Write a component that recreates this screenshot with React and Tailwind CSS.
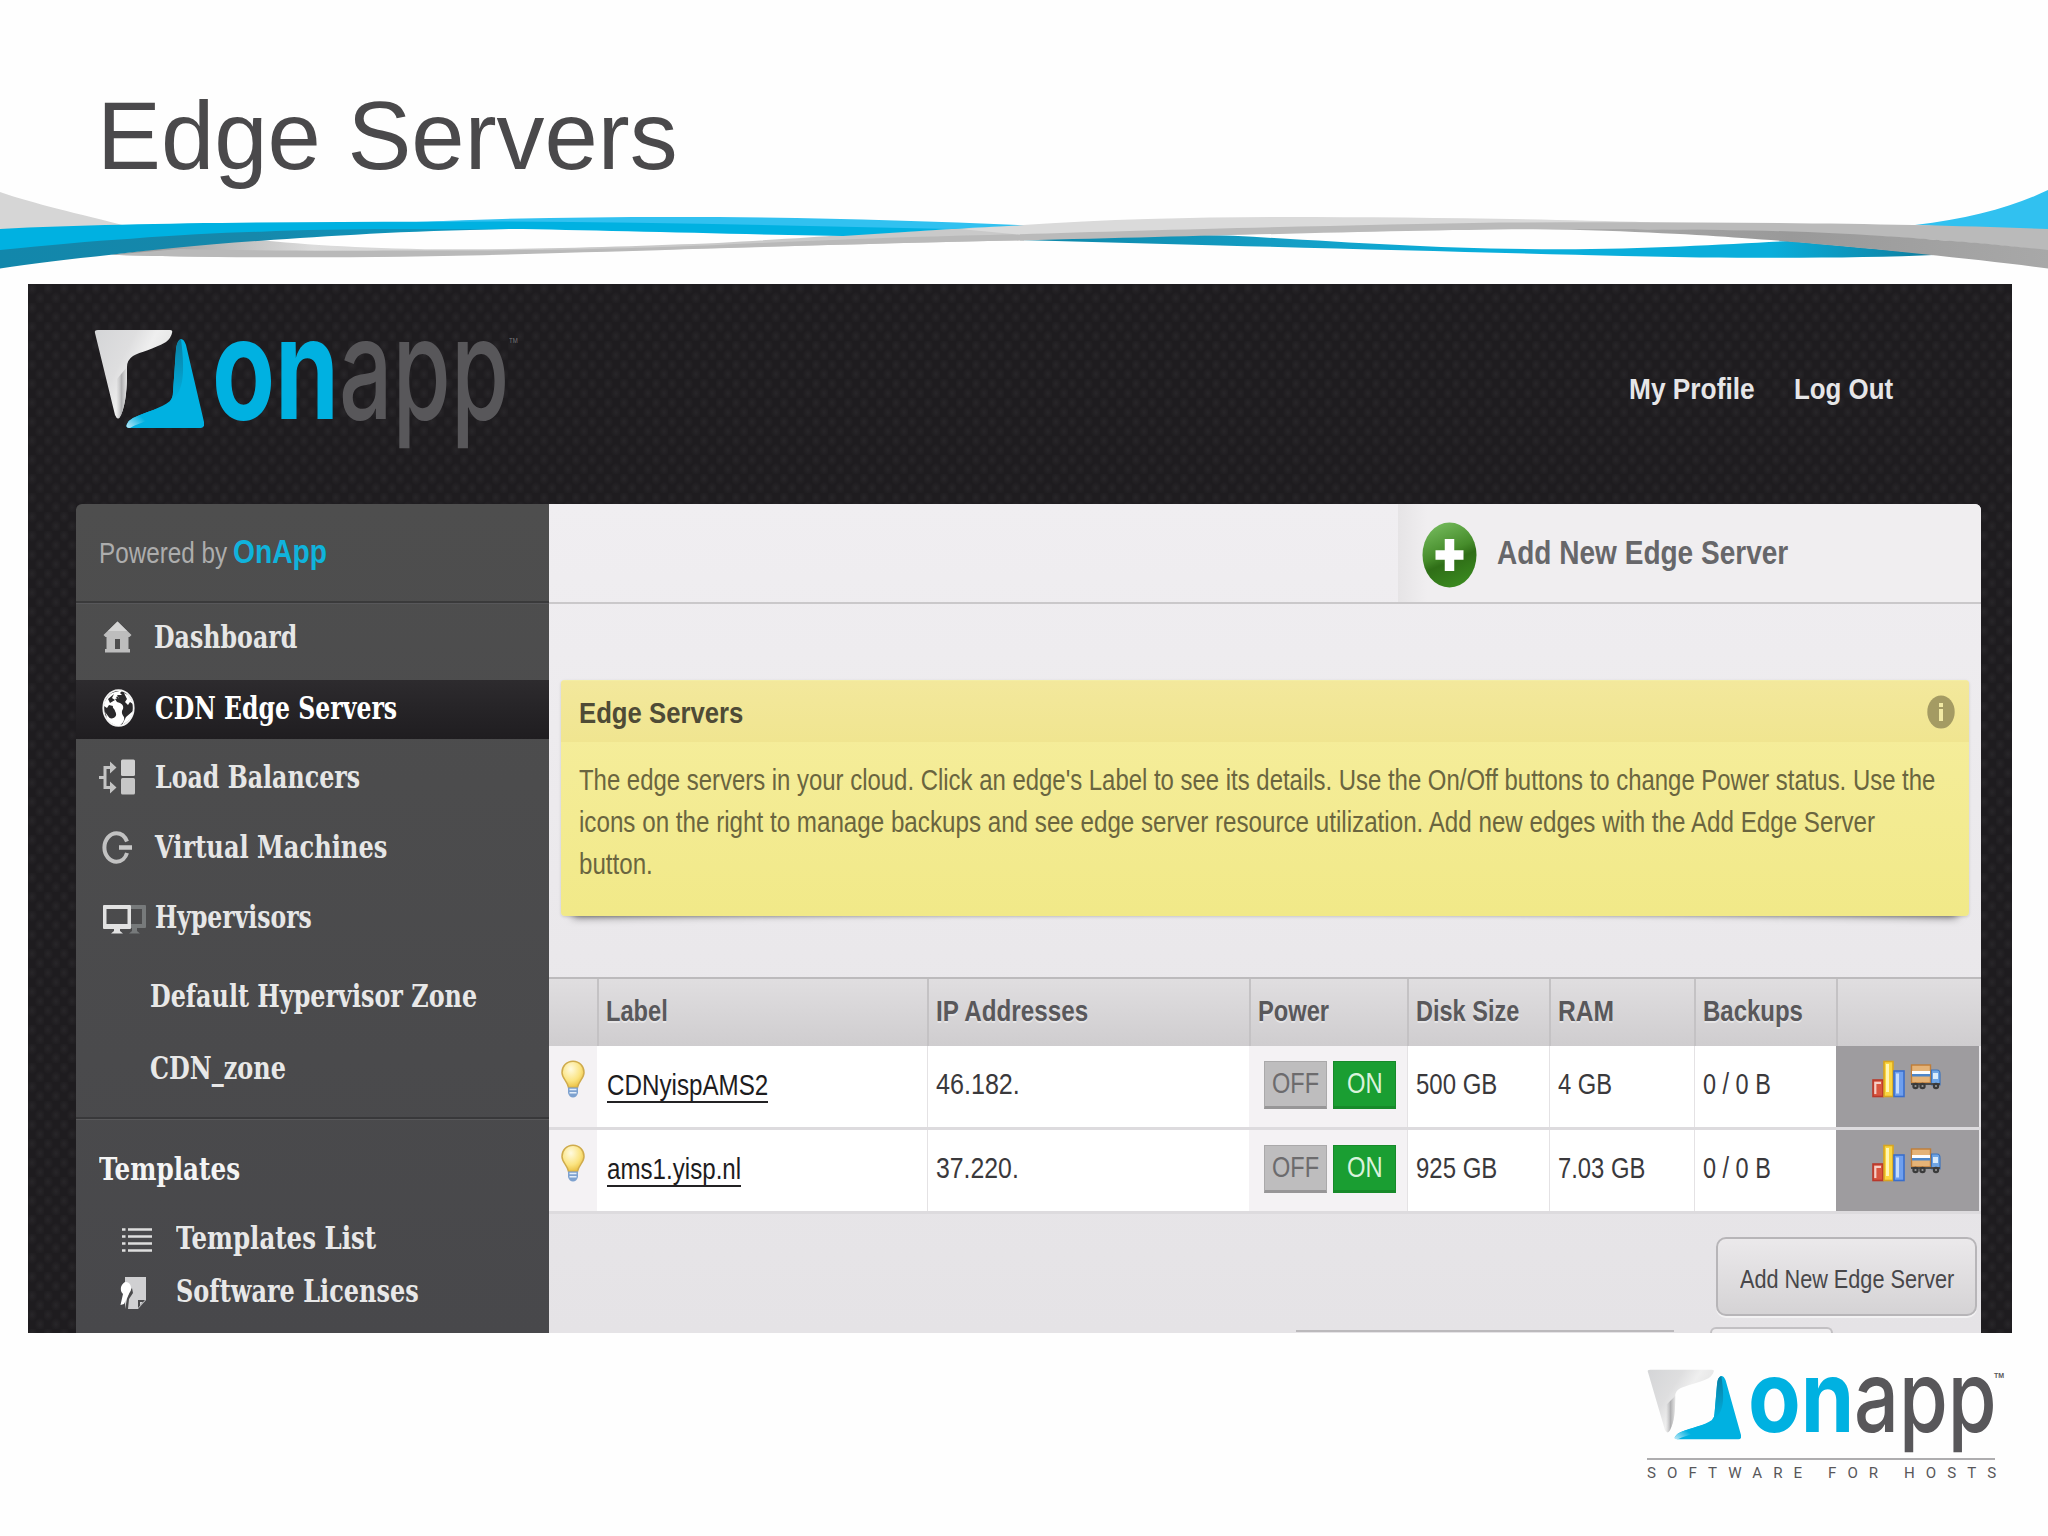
import React, { useLayoutEffect, useRef, useState } from "react";

/* Text squeezed or stretched horizontally to an exact width. */
function Fit({ w, className = "", children }) {
  const ref = useRef(null);
  const [scale, setScale] = useState(1);
  useLayoutEffect(() => {
    const measure = () => {
      if (ref.current) setScale(w / ref.current.offsetWidth);
    };
    measure();
    if (document.fonts && document.fonts.ready) document.fonts.ready.then(measure);
  }, [w]);
  return (
    <span className={"inline-block whitespace-nowrap " + className} style={{ width: w }}>
      <span ref={ref} className="inline-block origin-left" style={{ transform: `scaleX(${scale})` }}>
        {children}
      </span>
    </span>
  );
}

function Waves() {
  return (
    <svg viewBox="0 190 2048 94" className="block h-[94px] w-full">
      <defs>
        <linearGradient id="wBlueLow" x1="1024" x2="1935" y1="0" y2="0" gradientUnits="userSpaceOnUse">
          <stop offset="0" stopColor="#0c86a8" />
          <stop offset="0.3" stopColor="#159fc6" />
          <stop offset="0.5" stopColor="#0aaedb" />
          <stop offset="0.82" stopColor="#0aaedb" />
          <stop offset="1" stopColor="#0f7c9c" />
        </linearGradient>
        <linearGradient id="wGreyL" x1="111" x2="560" y1="0" y2="0" gradientUnits="userSpaceOnUse">
          <stop offset="0" stopColor="#8f8f8f" />
          <stop offset="0.45" stopColor="#dcdcdc" />
          <stop offset="1" stopColor="#c9c9c9" />
        </linearGradient>
        <linearGradient id="wDark" x1="0" x2="509" y1="0" y2="0" gradientUnits="userSpaceOnUse">
          <stop offset="0" stopColor="#1287ab" />
          <stop offset="0.5" stopColor="#1688ab" />
          <stop offset="1" stopColor="#0b9cc5" />
        </linearGradient>
        <linearGradient id="wDarkGrey" x1="1533" x2="2048" y1="0" y2="0" gradientUnits="userSpaceOnUse">
          <stop offset="0" stopColor="#aeaeae" />
          <stop offset="0.5" stopColor="#999" />
          <stop offset="1" stopColor="#a8a8a8" />
        </linearGradient>
      </defs>
      <path fill="#d6d6d6" d="M0 192C35 204 75 213 131 227L0 232Z" />
      <path fill="#31c1f0" d="M1915 225C1970 219 2015 206 2048 190V232Z" />
      <path fill="url(#wBlueLow)" d="M1019 240C1090 236 1160 233 1233 235.7C1350 242 1430 249 1560 249.3C1650 249 1730 244 1788 241L1940 254.7C1870 258 1790 258 1700 257.5C1560 255 1400 250 1220 245.5Z" />
      <path fill="url(#wGreyL)" d="M240 238C300 244 360 249 457 249.3C540 249.5 640 246 718 243C770 240 815 237 843 235L967 228L1024 225V240C880 243 700 249 560 252C400 258 230 258 111 254.7Z" />
      <path fill="#b9b9b9" d="M180 249C260 251 340 251 400 250.5C560 251 640 248 718 245C860 238 940 236 1024 234V240.5C880 243 700 249 560 253C400 258.5 230 258.5 111 254.7Z" />
      <path fill="#dadada" d="M1019 225.3C1110 219 1200 217 1285 217C1400 217 1540 219 1650 222.4L1650 226L1024 235L960 229Z" />
      <path fill="#bababa" d="M1020 234.3C1150 230 1350 225 1500 222.5C1700 221.5 1900 223 2048 229V251C1900 232 1700 228.5 1533 229.2C1400 230 1250 235 1020 240.5Z" />
      <path fill="url(#wDarkGrey)" d="M1533 229C1640 231 1700 235 1742 238C1800 242 1840 246 1873 249C1940 256 2000 262 2048 268.5V250C2010 246 1970 242 1938 240C1890 236 1850 234 1808 232C1720 229 1640 229 1533 229Z" />
      <path fill="#00b1e1" d="M0 229C120 223 280 222 427 221.7C560 219 660 219 780 222L967 228L843 236C720 234 600 230 509 229L392 230L0 252Z" />
      <path fill="#31c1f0" d="M416 222C520 217.5 620 216.5 718 217C830 218 930 221 1024 225.3L950 229C800 226 650 222 500 221.5Z" />
      <path fill="url(#wDark)" d="M0 250C50 245 90 241 131 238.7C180 235 220 233 261 231.7C300 230 350 229 392 229L509 229C400 231 330 236 261 240.7C200 245 150 250 111 254.7C70 259 30 264 0 268.5Z" />
    </svg>
  );
}

function LogoMark({ className, id }) {
  return (
    <svg viewBox="0 0 110 100" preserveAspectRatio="none" className={className}>
      <defs>
        <linearGradient id={id + "g"} x1="0" y1="0" x2="1" y2="0.6">
          <stop offset="0" stopColor="#d4d5d7" />
          <stop offset="0.4" stopColor="#dededf" />
          <stop offset="0.6" stopColor="#efefef" />
          <stop offset="1" stopColor="#dcdcdc" />
        </linearGradient>
        <linearGradient id={id + "s"} x1="0" y1="0" x2="1" y2="0">
          <stop offset="0" stopColor="#c5c5c6" stopOpacity="0" />
          <stop offset="0.5" stopColor="#b0b0b2" />
          <stop offset="1" stopColor="#e5e5e5" />
        </linearGradient>
        <linearGradient id={id + "b"} x1="0" y1="0" x2="0" y2="1">
          <stop offset="0" stopColor="#0a7ea2" />
          <stop offset="1" stopColor="#00b1e1" />
        </linearGradient>
        <linearGradient id={id + "w"} x1="0" y1="1" x2="1" y2="0.4">
          <stop offset="0" stopColor="#bfe9f7" />
          <stop offset="0.5" stopColor="#00b1e1" />
        </linearGradient>
      </defs>
      <path fill={"url(#" + id + "g)"} d="M1 4Q0 1 4 1H76Q79 1 78 4Q77 9 72 13C60 20 46 23 39 27Q33 31 33 38C33 60 32 74 27 86Q24 93 21 86Z" />
      <path fill={"url(#" + id + "s)"} d="M23 50L33 38C33 60 32 74 27 86Q24 93 22 86Z" />
      <path fill="#00b1e1" d="M87 10Q90 10 92 16L110 93Q111 99 107 99H36Q31 99 33 95Q35 91 39 89C52 83 68 79 76 72Q79 69 79 63L82 20Q84 10 87 10Z" />
      <path fill={"url(#" + id + "b)"} d="M87 10Q82 12 82 22L79 63Q79 69 76 72C88 65 92 50 87 10Z" />
      <path fill={"url(#" + id + "w)"} d="M33 95Q35 91 39 89C52 83 64 80 72 76C66 90 48 92 36 99Q31 99 33 95Z" />
    </svg>
  );
}

const BulbIcon = () => (
  <svg viewBox="0 0 24 38" className="h-[38px] w-6">
    <defs>
      <radialGradient id="bulb" cx="0.4" cy="0.3" r="0.75">
        <stop offset="0" stopColor="#fffbe0" />
        <stop offset="0.6" stopColor="#fbe481" />
        <stop offset="1" stopColor="#e8bb3a" />
      </radialGradient>
    </defs>
    <path d="M12 1.2C5.5 1.2 1 6.500 1 12.500C1 18.500 6.500 21 7.500 27.500H16.500C17.500 21 23 18.500 23 12.500C23 6.500 18.500 1.200 12 1.200Z" fill="url(#bulb)" stroke="#cfab4c" strokeWidth="1.5" />
    <path d="M7 27.500H17V33Q15.500 37.500 12 37.500Q8.500 37.500 7 33Z" fill="#7ea2cf" />
    <path d="M8.500 29.500H15.500M8.500 32.800H15.500" stroke="#e3eefa" strokeWidth="1.500" />
  </svg>
);

const ChartIcon = () => (
  <svg viewBox="0 0 33 38" className="h-[38px] w-[33px]">
    <rect x="1" y="20" width="10" height="16.500" fill="#d8553f" stroke="#b8382b" strokeWidth="1.600" />
    <path d="M3.300 34V22.800H9" fill="none" stroke="#f6cfc6" strokeWidth="2.200" />
    <rect x="12" y="1.500" width="9" height="35" fill="#fbd640" stroke="#d8a521" strokeWidth="1.600" />
    <rect x="14" y="4" width="3" height="28" fill="#fff6b5" />
    <rect x="22" y="11" width="10" height="25.500" fill="#6f9fee" stroke="#3a6ecb" strokeWidth="1.600" />
    <rect x="24" y="13.500" width="3" height="20" fill="#c5dcfb" />
  </svg>
);

const TruckIcon = () => (
  <svg viewBox="0 0 31 26" className="h-[26px] w-[31px]">
    <rect x="1.500" y="1" width="19" height="18" fill="#e5b377" stroke="#bf7d38" strokeWidth="1.400" />
    <rect x="2" y="7" width="18" height="3" fill="#fdfdfd" />
    <rect x="2" y="10" width="18" height="2.500" fill="#4d86c9" />
    <path d="M21.500 6H27Q30 6 30 10V21H21.500Z" fill="#6fa5e4" stroke="#3d74bd" strokeWidth="1.200" />
    <rect x="23" y="9" width="5" height="6" fill="#d9ebfb" />
    <path d="M1 19H30V21H1Z" fill="#4a4a4a" />
    <circle cx="5.500" cy="22" r="3.200" fill="#3a3a3a" />
    <circle cx="12.500" cy="22" r="3.200" fill="#3a3a3a" />
    <circle cx="26" cy="22" r="3.200" fill="#3a3a3a" />
    <circle cx="5.500" cy="22" r="1.100" fill="#999" />
    <circle cx="12.500" cy="22" r="1.100" fill="#999" />
    <circle cx="26" cy="22" r="1.100" fill="#999" />
  </svg>
);

const HomeIcon = () => (
  <svg viewBox="0 0 29 32" className="ml-[27px] h-8 w-[29px] shrink-0">
    <path fill="#bdbdbd" fillRule="evenodd" d="M14.500 0.500L28.500 14L26.500 16H25.500V28H27V31.500H2V28H3.500V16H2.500L0.500 14ZM12 18V28H17V18Z" />
    <path fill="#d4d4d4" d="M14.500 0.500L24 10H5Z" />
  </svg>
);

const GlobeIcon = () => (
  <svg viewBox="0 0 33 38" className="ml-[26px] h-[38px] w-[33px] shrink-0">
    <ellipse cx="16.500" cy="19" rx="15.200" ry="17.800" fill="#2a292b" stroke="#f2f2f2" strokeWidth="1.800" />
    <path fill="#fff" d="M5 9C8 4 13 2 20 2L18 4L20 6L15 6L17 9L13 10L15 13L18 14C20 15 22 17 21 20C19 23 20 25 22 28C23 32 20 35 17 37C10 36 5 31 4 27C8 30 11 30 13 28C15 26 14 24 13 22C13 20 10 19 11 17L7 16L5 19L2 17C2 14 3 12 5 9Z" />
    <path fill="#fff" d="M22 4L26 6L29 10L31 15L28 13L26 16L23 13L25 10ZM24 28L31 22C30 29 26 33 20 36ZM3 23L6 27L12 35L6 31Z" />
    <path fill="#2a292b" d="M6 10L12 5L10 9L13 11L8 14ZM14 8L17 7L16 11ZM4 19L11 20L13 26L8 26Z" />
  </svg>
);

const BalancerIcon = () => (
  <svg viewBox="0 0 36 36" className="ml-[23px] h-9 w-9 shrink-0">
    <path fill="none" stroke="#c4c4c4" strokeWidth="3" d="M12 8.500H6V28.500H12M0 18.500H6" />
    <path fill="#c4c4c4" d="M11 2.500L17.500 8.500L11 14.500ZM11 22.500L17.500 28.500L11 34.500Z" />
    <rect x="22" y="0.500" width="14" height="16.500" rx="1.500" fill="#d0d0d0" />
    <rect x="22" y="19" width="14" height="16.500" rx="1.500" fill="#c6c6c6" />
  </svg>
);

const MachineIcon = () => (
  <svg viewBox="0 0 30 33" className="ml-[26px] h-[33px] w-[30px] shrink-0">
    <path fill="none" stroke="#c2c2c2" strokeWidth="4" d="M25 10.500C23 5.500 19 2.300 14.500 2.300C8 2.300 2.400 8.500 2.400 16.500C2.400 24.500 8 30.700 14.500 30.700C19.500 30.700 23.500 27 25 22" />
    <path stroke="#c8c8c8" strokeWidth="4.500" d="M17 16.500H30" />
  </svg>
);

const MonitorsIcon = () => (
  <svg viewBox="0 0 45 30" className="mt-1 ml-[26px] h-[30px] w-[45px] shrink-0">
    <path fill="#777a7b" fillRule="evenodd" d="M29 1H43Q44 1 44 2V23Q44 24 43 24H35V27L38 29.500H27L30 27V24H28V20H40V5H29Z" />
    <path fill="#e2e2e2" fillRule="evenodd" d="M2 1H28Q29 1 29 2V24Q29 25 28 25H18V27L21 29.500H9L12 27V25H2Q1 25 1 24V2Q1 1 2 1ZM4.500 5V20H25.500V5Z" />
  </svg>
);

const ListIcon = () => (
  <svg viewBox="0 0 30 26" className="mt-[3px] ml-[46px] h-[26px] w-[30px] shrink-0">
    <path stroke="#dedede" strokeWidth="2.600" d="M0 2.500H3.500M6 2.500H30M0 9.500H3.500M6 9.500H30M0 16.500H3.500M6 16.500H30M0 23.500H3.500M6 23.500H30" />
  </svg>
);

const LicenseIcon = () => (
  <svg viewBox="0 0 27 34" className="mt-[3px] ml-[44px] h-[34px] w-[27px] shrink-0">
    <path fill="#d0d0d2" d="M5 1H26V24L18 33H5Z" />
    <path fill="#4a4a4c" d="M18 24H25L18 32Z" />
    <path fill="#d0d0d2" d="M20 26H23L20 29.500Z" />
    <path fill="#4a4a4c" d="M12 12L13 17L9 23L8 33H5L8 18Z" />
    <path fill="#fff" d="M6 6C9 6 11.500 9 11 13C11 15 9.500 16.500 9 18L4 28L0.500 29L3 18C1 16 0.500 14 1 11C2 8 4 6 6 6Z" />
  </svg>
);

const sections = [
  { label: "Dashboard", w: 143, Icon: HomeIcon, row: "h-[66px]", gap: "w-[22px]", color: "text-[#e6e6e6]" },
  { label: "CDN Edge Servers", w: 242, Icon: GlobeIcon, row: "mt-[10px] h-[59px] pb-[4px] bg-linear-to-b from-[#2d2b2e] to-[#1f1d20]", gap: "w-[20px]", color: "text-white" },
  { label: "Load Balancers", w: 205, Icon: BalancerIcon, row: "h-[76px]", gap: "w-[20px]", color: "text-[#e6e6e6]" },
  { label: "Virtual Machines", w: 232, Icon: MachineIcon, row: "h-[64px]", gap: "w-[23px]", color: "text-[#e6e6e6]" },
  { label: "Hypervisors", w: 157, Icon: MonitorsIcon, row: "h-[76px]", gap: "w-[8px]", color: "text-[#e6e6e6]" },
];

function Sidebar() {
  return (
    <aside className="w-[473px] shrink-0 overflow-hidden rounded-tl-md bg-linear-to-b from-[#4e4e4e] to-[#48484b] font-['DejaVu_Serif',serif] text-[31px] leading-none font-bold text-[#e8e8e8]">
      <div className="flex h-[99px] items-center border-b-2 border-[#3a3a3b] pb-[3px] pl-[23px] font-['Liberation_Sans',sans-serif] font-normal">
        <div className="flex items-baseline gap-[6px]">
          <Fit w={128} className="text-[29px] text-[#adadad]">Powered by</Fit>
          <Fit w={94} className="text-[33px] font-bold text-[#10b3dc]">OnApp</Fit>
        </div>
      </div>
      <nav className="border-t border-[#57575a]">
        {sections.map(({ label, w, Icon, row, gap, color }) => (
          <a key={label} className={"flex items-center " + row}>
            <Icon />
            <span className={"shrink-0 " + gap} />
            <Fit w={w} className={"pt-[1px] " + color}>{label}</Fit>
          </a>
        ))}
        <a className="flex h-[82px] items-center pt-[1px] pl-[74px]"><Fit w={327}>Default Hypervisor Zone</Fit></a>
        <a className="flex h-[62px] items-center pt-[1px] pl-[74px]"><Fit w={136}>CDN_zone</Fit></a>
        <div className="mt-[18px] h-[2px] bg-[#38383a]" />
        <div className="flex h-[98px] items-center border-t border-[#59595b] pt-[1px] pl-[23px] text-[#f4f4f4]"><Fit w={141}>Templates</Fit></div>
        <a className="flex h-[42px] items-center"><ListIcon /><span className="w-[24px]" /><Fit w={200}>Templates List</Fit></a>
        <a className="flex h-[64px] items-center"><LicenseIcon /><span className="w-[29px]" /><Fit w={243}>Software Licenses</Fit></a>
      </nav>
    </aside>
  );
}

const columns = "grid grid-cols-[48px_330px_322px_158px_142px_145px_142px_143px]";

const headings = [
  ["Label", 62],
  ["IP Addresses", 152],
  ["Power", 71],
  ["Disk Size", 103],
  ["RAM", 56],
  ["Backups", 100],
];

const servers = [
  { label: ["CDNyispAMS2", 161], ip: ["46.182.", 84], disk: ["500 GB", 81], ram: ["4 GB", 54], backups: ["0 / 0 B", 68] },
  { label: ["ams1.yisp.nl", 134], ip: ["37.220.", 83], disk: ["925 GB", 81], ram: ["7.03 GB", 87], backups: ["0 / 0 B", 68] },
];

function Cell({ text, className = "" }) {
  return (
    <div className={"flex items-center border-l border-[#e4e2e4] bg-white pb-[4px] pl-[8px] " + className}>
      <Fit w={text[1]}>{text[0]}</Fit>
    </div>
  );
}

function ServerTable() {
  return (
    <div className="mt-[61px] text-[29px] leading-none text-[#3a393c]">
      <div className={columns + " h-[69px] border-t-2 border-[#bcbabc] bg-linear-to-b from-[#e0dee0] to-[#cfcdcf] font-bold text-[#59585b]"}>
        <div />
        {headings.map(([name, w]) => (
          <div key={name} className="flex items-center border-l-2 border-[#c4c2c4] pb-[3px] pl-[7px] [text-shadow:0_2px_0_#e6e5e6]">
            <Fit w={w}>{name}</Fit>
          </div>
        ))}
        <div className="border-l-2 border-[#c4c2c4]" />
      </div>
      {servers.map((s) => (
        <div key={s.label[0]} className={columns + " h-[84px] border-b-[3px] border-[#dddbde]"}>
          <div className="bg-[#f4f2f4] pt-[14px] pl-3"><BulbIcon /></div>
          <div className="bg-white pt-[23px] pl-[10px] text-[#1d1c1e]">
            <div className="h-[34px] w-max border-b-2 border-[#232224] leading-[33px]"><Fit w={s.label[1]}>{s.label[0]}</Fit></div>
          </div>
          <Cell text={s.ip} />
          <div className="flex gap-[6px] bg-[#f4f2f4] pt-[15px] pl-[15px]">
            <span className="flex h-[48px] w-[63px] items-center justify-center border border-b-3 border-[#aaa9aa] border-b-[#979697] bg-[#bebdbe] pb-[2px] text-[#6c6b6d]"><Fit w={47}>OFF</Fit></span>
            <span className="flex h-[48px] w-[63px] items-center justify-center border border-b-3 border-[#178a2a] bg-[#1a9e32] pb-[2px] text-[#d9f3dc]"><Fit w={36}>ON</Fit></span>
          </div>
          <Cell text={s.disk} />
          <Cell text={s.ram} />
          <Cell text={s.backups} />
          <div className="flex items-start gap-[5px] bg-[#9e9c9f] pt-[14px] pl-[36px]">
            <ChartIcon />
            <span className="pt-[4px]"><TruckIcon /></span>
          </div>
        </div>
      ))}
    </div>
  );
}

function Content() {
  return (
    <main className="flex w-[1432px] flex-col overflow-hidden rounded-tr-md bg-linear-to-b from-[#f0eef1] to-[#e5e3e6]">
      <div className="flex h-[100px] shrink-0 justify-end border-b-2 border-[#cac8ca]">
        <div className="flex w-[583px] items-center bg-linear-to-r from-[#e6e4e6] via-[#f0eef0] via-5% to-[#f0eef0] pl-[24px]">
          <svg viewBox="0 0 55 66" className="mt-1 h-[66px] w-[55px]">
            <defs>
              <linearGradient id="plus" x1="0.3" y1="0" x2="0.65" y2="1">
                <stop offset="0" stopColor="#73b95b" />
                <stop offset="0.45" stopColor="#468c2b" />
                <stop offset="0.6" stopColor="#2f6e17" />
                <stop offset="1" stopColor="#3a8a1f" />
              </linearGradient>
            </defs>
            <ellipse cx="27.500" cy="33" rx="27" ry="32.500" fill="url(#plus)" />
            <path d="M27.500 17V49M13.500 33H41.500" stroke="#fff" strokeWidth="9.500" />
          </svg>
          <Fit w={291} className="ml-[20px] pb-[2px] text-[34px] leading-none font-bold text-[#67676a]">Add New Edge Server</Fit>
        </div>
      </div>

      <div className="relative mt-[76px] ml-3 w-[1408px] shrink-0">
        <div className="absolute bottom-[9px] left-3 h-4 w-[45%] origin-bottom-left -rotate-[0.9deg] shadow-[0_10px_8px_rgba(0,0,0,0.6)]" />
        <div className="absolute right-3 bottom-[9px] h-4 w-[45%] origin-bottom-right rotate-[0.9deg] shadow-[0_10px_8px_rgba(0,0,0,0.6)]" />
        <section className="relative h-[236px] overflow-hidden rounded-sm bg-linear-to-b from-[#f6ee9f] to-[#f1e988] text-[29px] shadow-[0_1px_3px_rgba(0,0,0,0.15)]">
          <div className="flex h-[62px] items-center justify-between border-t border-[#f3eda5] bg-linear-to-b from-[#f3e89c] to-[#f0e590] pr-[14px] pl-[18px] leading-none">
            <Fit w={164} className="pt-1 font-bold text-[#4f4b36]">Edge Servers</Fit>
            <svg viewBox="0 0 28 34" className="h-[34px] w-7">
              <ellipse cx="14" cy="17" rx="13.700" ry="16.500" fill="#a49b63" />
              <path d="M14 8V12M14 14V26" stroke="#f1e9a4" strokeWidth="4" />
            </svg>
          </div>
          <p className="flex flex-col pt-[17px] pl-[18px] leading-[42px] text-[#6a653f]">
            <Fit w={1356}>The edge servers in your cloud. Click an edge's Label to see its details. Use the On/Off buttons to change Power status. Use the</Fit>
            <Fit w={1296}>icons on the right to manage backups and see edge server resource utilization. Add new edges with the Add Edge Server</Fit>
            <Fit w={74}>button.</Fit>
          </p>
        </section>
      </div>

      <ServerTable />

      <div className="flex justify-end pt-[23px] pr-[4px]">
        <button className="flex h-[79px] w-[261px] items-center justify-center rounded-[10px] border-2 border-[#b7b5b8] bg-linear-to-b from-[#ebe9eb] to-[#d5d3d5] pt-1 text-[26px] leading-none text-[#48474a] shadow-[0_2px_0_#f3f2f3]">
          <Fit w={214}>Add New Edge Server</Fit>
        </button>
      </div>
      <div className="mt-[11px] flex h-[6px] items-end justify-end gap-[36px] overflow-hidden pr-[148px]">
        <div className="h-[3px] w-[378px] border-t-2 border-[#bbb9bc]" />
        <div className="h-[6px] w-[123px] rounded-t-[10px] border-2 border-b-0 border-[#c2c0c3] bg-[#eeecee]" />
      </div>
    </main>
  );
}

export default function App() {
  return (
    <div className="flex h-[1536px] w-[2048px] flex-col overflow-hidden bg-[#fefefe] font-['Liberation_Sans',Arial,sans-serif]">
      <h1 className="h-[190px] shrink-0 pt-[82px] pl-[97px] text-[96px] leading-[108px] text-[#4a494b]">
        <Fit w={581}>Edge Servers</Fit>
      </h1>
      <Waves />

      <div className="mx-[28px] flex h-[1049px] w-[1984px] shrink-0 flex-col overflow-hidden bg-[#1e1c1f] bg-[radial-gradient(ellipse_at_25%_25%,#282629_0,transparent_32%),radial-gradient(ellipse_at_75%_75%,#282629_0,transparent_32%)] bg-size-[16px_19px]">
        <header className="flex h-[220px] shrink-0 items-start pl-[66px]">
          <div className="mt-[45px] flex h-[115px] font-[Inter,sans-serif] text-[141px] leading-[78px]">
            <LogoMark id="top" className="h-[100px] w-[110px] shrink-0" />
            <Fit w={127} className="ml-[8px] font-bold text-[#00b1e1]">on</Fit>
            <Fit w={170} className="font-medium text-[#58575a]">app</Fit>
            <Fit w={9} className="pt-[8px] font-['Liberation_Sans',sans-serif] text-[8px] leading-none text-[#77767a]">TM</Fit>
          </div>
          <nav className="mt-[90px] mr-[119px] ml-auto flex gap-[39px] text-[29px] leading-[30px] font-bold text-[#e6e6e8]">
            <Fit w={126}>My Profile</Fit>
            <Fit w={99}>Log Out</Fit>
          </nav>
        </header>
        <div className="flex min-h-0 flex-1 pl-[48px]">
          <Sidebar />
          <Content />
        </div>
      </div>

      <footer className="mt-[36px] ml-[1647px] flex w-[360px] flex-col">
        <div className="flex h-[82px] font-[Inter,sans-serif] text-[99px] leading-[54px]">
          <LogoMark id="foot" className="h-[71px] w-[94px] shrink-0" />
          <Fit w={106} className="ml-[7px] font-bold text-[#00b1e1]">on</Fit>
          <Fit w={143} className="font-medium text-[#58575a]">app</Fit>
          <Fit w={10} className="-ml-[3px] pt-[3px] font-['Liberation_Sans',sans-serif] text-[7px] leading-none font-bold text-[#58575a]">TM</Fit>
        </div>
        <div className="mt-[7px] h-[2px] w-[348px] bg-[#aeadaf]" />
        <Fit w={360} className="mt-[4px] font-[Roboto,sans-serif] text-[15px] leading-[18px] tracking-[11px] text-[#58575a]">SOFTWARE FOR HOSTS</Fit>
      </footer>
    </div>
  );
}
